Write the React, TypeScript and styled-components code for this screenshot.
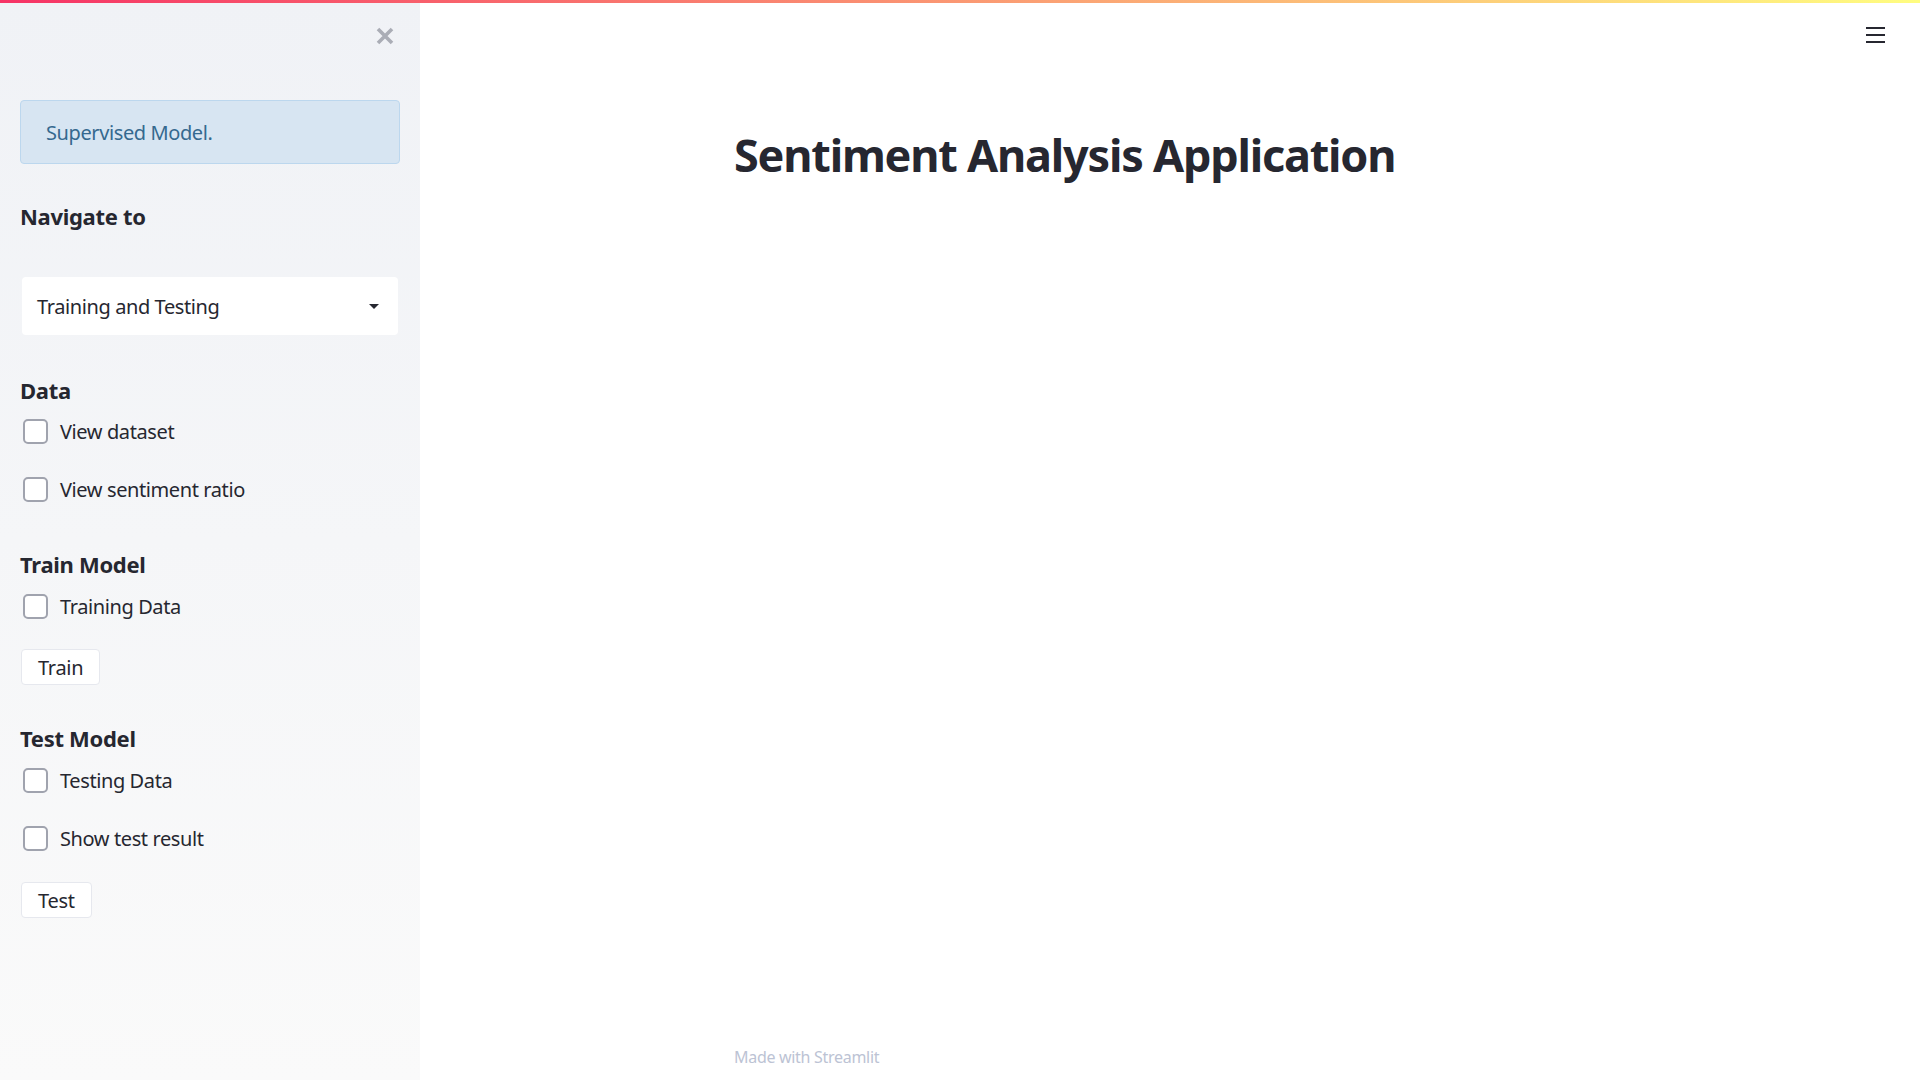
import React from "react";
import styled, { createGlobalStyle } from "styled-components";

const GlobalStyle = createGlobalStyle`
  html, body { margin: 0; padding: 0; }
  body {
    font-family: "Noto Sans", "Open Sans", sans-serif;
    color: #262730;
    background: #ffffff;
  }
  * { box-sizing: border-box; }
`;

const Page = styled.div`
  display: flex;
  width: 100%;
  height: 100vh;
  position: relative;
  overflow: hidden;
`;

const Decoration = styled.div`
  position: absolute;
  top: 0;
  left: 0;
  right: 0;
  height: 3px;
  background-image: linear-gradient(90deg, #f63366, #fffd80);
  z-index: 10;
`;

const Sidebar = styled.aside`
  position: relative;
  width: 420px;
  flex: 0 0 420px;
  height: 100%;
  background-image: linear-gradient(180deg, #f0f2f6, #fafafa);
  padding: 100px 20px 0 20px;
  display: flex;
  flex-direction: column;
  align-items: flex-start;
  letter-spacing: -0.4px;
`;

const CloseButton = styled.button`
  position: absolute;
  top: 27px;
  left: 376px;
  width: 18px;
  height: 18px;
  padding: 0;
  border: none;
  background: transparent;
  display: flex;
  align-items: center;
  justify-content: center;
  cursor: pointer;
`;

const InfoBox = styled.div`
  width: 380px;
  height: 64px;
  display: flex;
  align-items: center;
  padding: 0 25px;
  border: 1px solid #bcd7ee;
  border-radius: 4px;
  background: #d7e5f2;
  color: #35698f;
  font-size: 20px;
`;

const SectionTitle = styled.h3<{ $mt: number }>`
  margin: ${(p) => p.$mt}px 0 0 0;
  height: 32px;
  line-height: 32px;
  font-size: 22px;
  font-weight: 700;
  letter-spacing: -0.3px;
  color: #262730;
  white-space: nowrap;
`;

const Select = styled.div<{ $mt: number }>`
  margin: ${(p) => p.$mt}px 0 0 2px;
  width: 376px;
  height: 58px;
  background: #ffffff;
  border-radius: 4px;
  display: flex;
  align-items: center;
  justify-content: space-between;
  padding: 0 19px 0 15px;
  font-size: 20px;
  color: #262730;
`;

const Caret = styled.span`
  width: 0;
  height: 0;
  border-left: 5px solid transparent;
  border-right: 5px solid transparent;
  border-top: 5px solid #262730;
`;

const CheckRow = styled.label<{ $mt: number }>`
  margin: ${(p) => p.$mt}px 0 0 3px;
  height: 40px;
  display: flex;
  align-items: center;
  gap: 12px;
  font-size: 20px;
  color: #262730;
  cursor: pointer;
`;

const Box = styled.span`
  width: 25px;
  height: 25px;
  border: 2px solid #a0a3ae;
  border-radius: 5px;
  background: #ffffff;
  flex: 0 0 auto;
`;

const Button = styled.button<{ $mt: number }>`
  margin: ${(p) => p.$mt}px 0 0 1px;
  height: 36px;
  padding: 0 16px;
  background: #ffffff;
  border: 1px solid #e6e8ee;
  border-radius: 4px;
  font-family: "Noto Sans", "Open Sans", sans-serif;
  font-size: 20px;
  letter-spacing: -0.3px;
  color: #262730;
  display: flex;
  align-items: center;
  cursor: pointer;
`;

const Main = styled.main`
  flex: 1 1 auto;
  height: 100%;
  display: flex;
  flex-direction: column;
  align-items: center;
  position: relative;
`;

const Block = styled.div`
  width: 912px;
  flex: 1 1 auto;
  padding: 127px 20px 11px 20px;
  display: flex;
  flex-direction: column;
`;

const Title = styled.h1`
  margin: 0;
  font-size: 45px;
  line-height: 56px;
  font-weight: 700;
  letter-spacing: -1.2px;
  color: #262730;
  white-space: nowrap;
`;

const Footer = styled.footer`
  margin-top: auto;
  height: 24px;
  line-height: 24px;
  font-size: 16px;
  letter-spacing: -0.3px;
  color: #bcc3d4;
`;

const Hamburger = styled.button`
  position: absolute;
  top: 22px;
  right: 34px;
  width: 22px;
  height: 26px;
  padding: 0;
  border: none;
  background: transparent;
  display: flex;
  flex-direction: column;
  align-items: center;
  justify-content: center;
  gap: 5px;
  cursor: pointer;
`;

const Bar = styled.span`
  width: 19px;
  height: 2px;
  background: #262730;
`;

export default function App() {
  return (
    <>
      <GlobalStyle />
      <Page>
        <Decoration />
        <Sidebar>
          <CloseButton aria-label="Close sidebar">
            <svg width="18" height="18" viewBox="0 0 18 18">
              <path d="M2 2 L16 16 M16 2 L2 16" stroke="#aaadb6" strokeWidth="3.6" strokeLinecap="butt" />
            </svg>
          </CloseButton>
          <InfoBox>Supervised Model.</InfoBox>
          <SectionTitle $mt={36}>Navigate to</SectionTitle>
          <Select $mt={45}>
            <span>Training and Testing</span>
            <Caret />
          </Select>
          <SectionTitle $mt={39}>Data</SectionTitle>
          <CheckRow $mt={5}><Box />View dataset</CheckRow>
          <CheckRow $mt={18}><Box />View sentiment ratio</CheckRow>
          <SectionTitle $mt={39}>Train Model</SectionTitle>
          <CheckRow $mt={6}><Box />Training Data</CheckRow>
          <Button $mt={23}>Train</Button>
          <SectionTitle $mt={37}>Test Model</SectionTitle>
          <CheckRow $mt={6}><Box />Testing Data</CheckRow>
          <CheckRow $mt={18}><Box />Show test result</CheckRow>
          <Button $mt={24}>Test</Button>
        </Sidebar>
        <Main>
          <Hamburger aria-label="Menu">
            <Bar />
            <Bar />
            <Bar />
          </Hamburger>
          <Block>
            <Title>Sentiment Analysis Application</Title>
            <Footer>Made with Streamlit</Footer>
          </Block>
        </Main>
      </Page>
    </>
  );
}
